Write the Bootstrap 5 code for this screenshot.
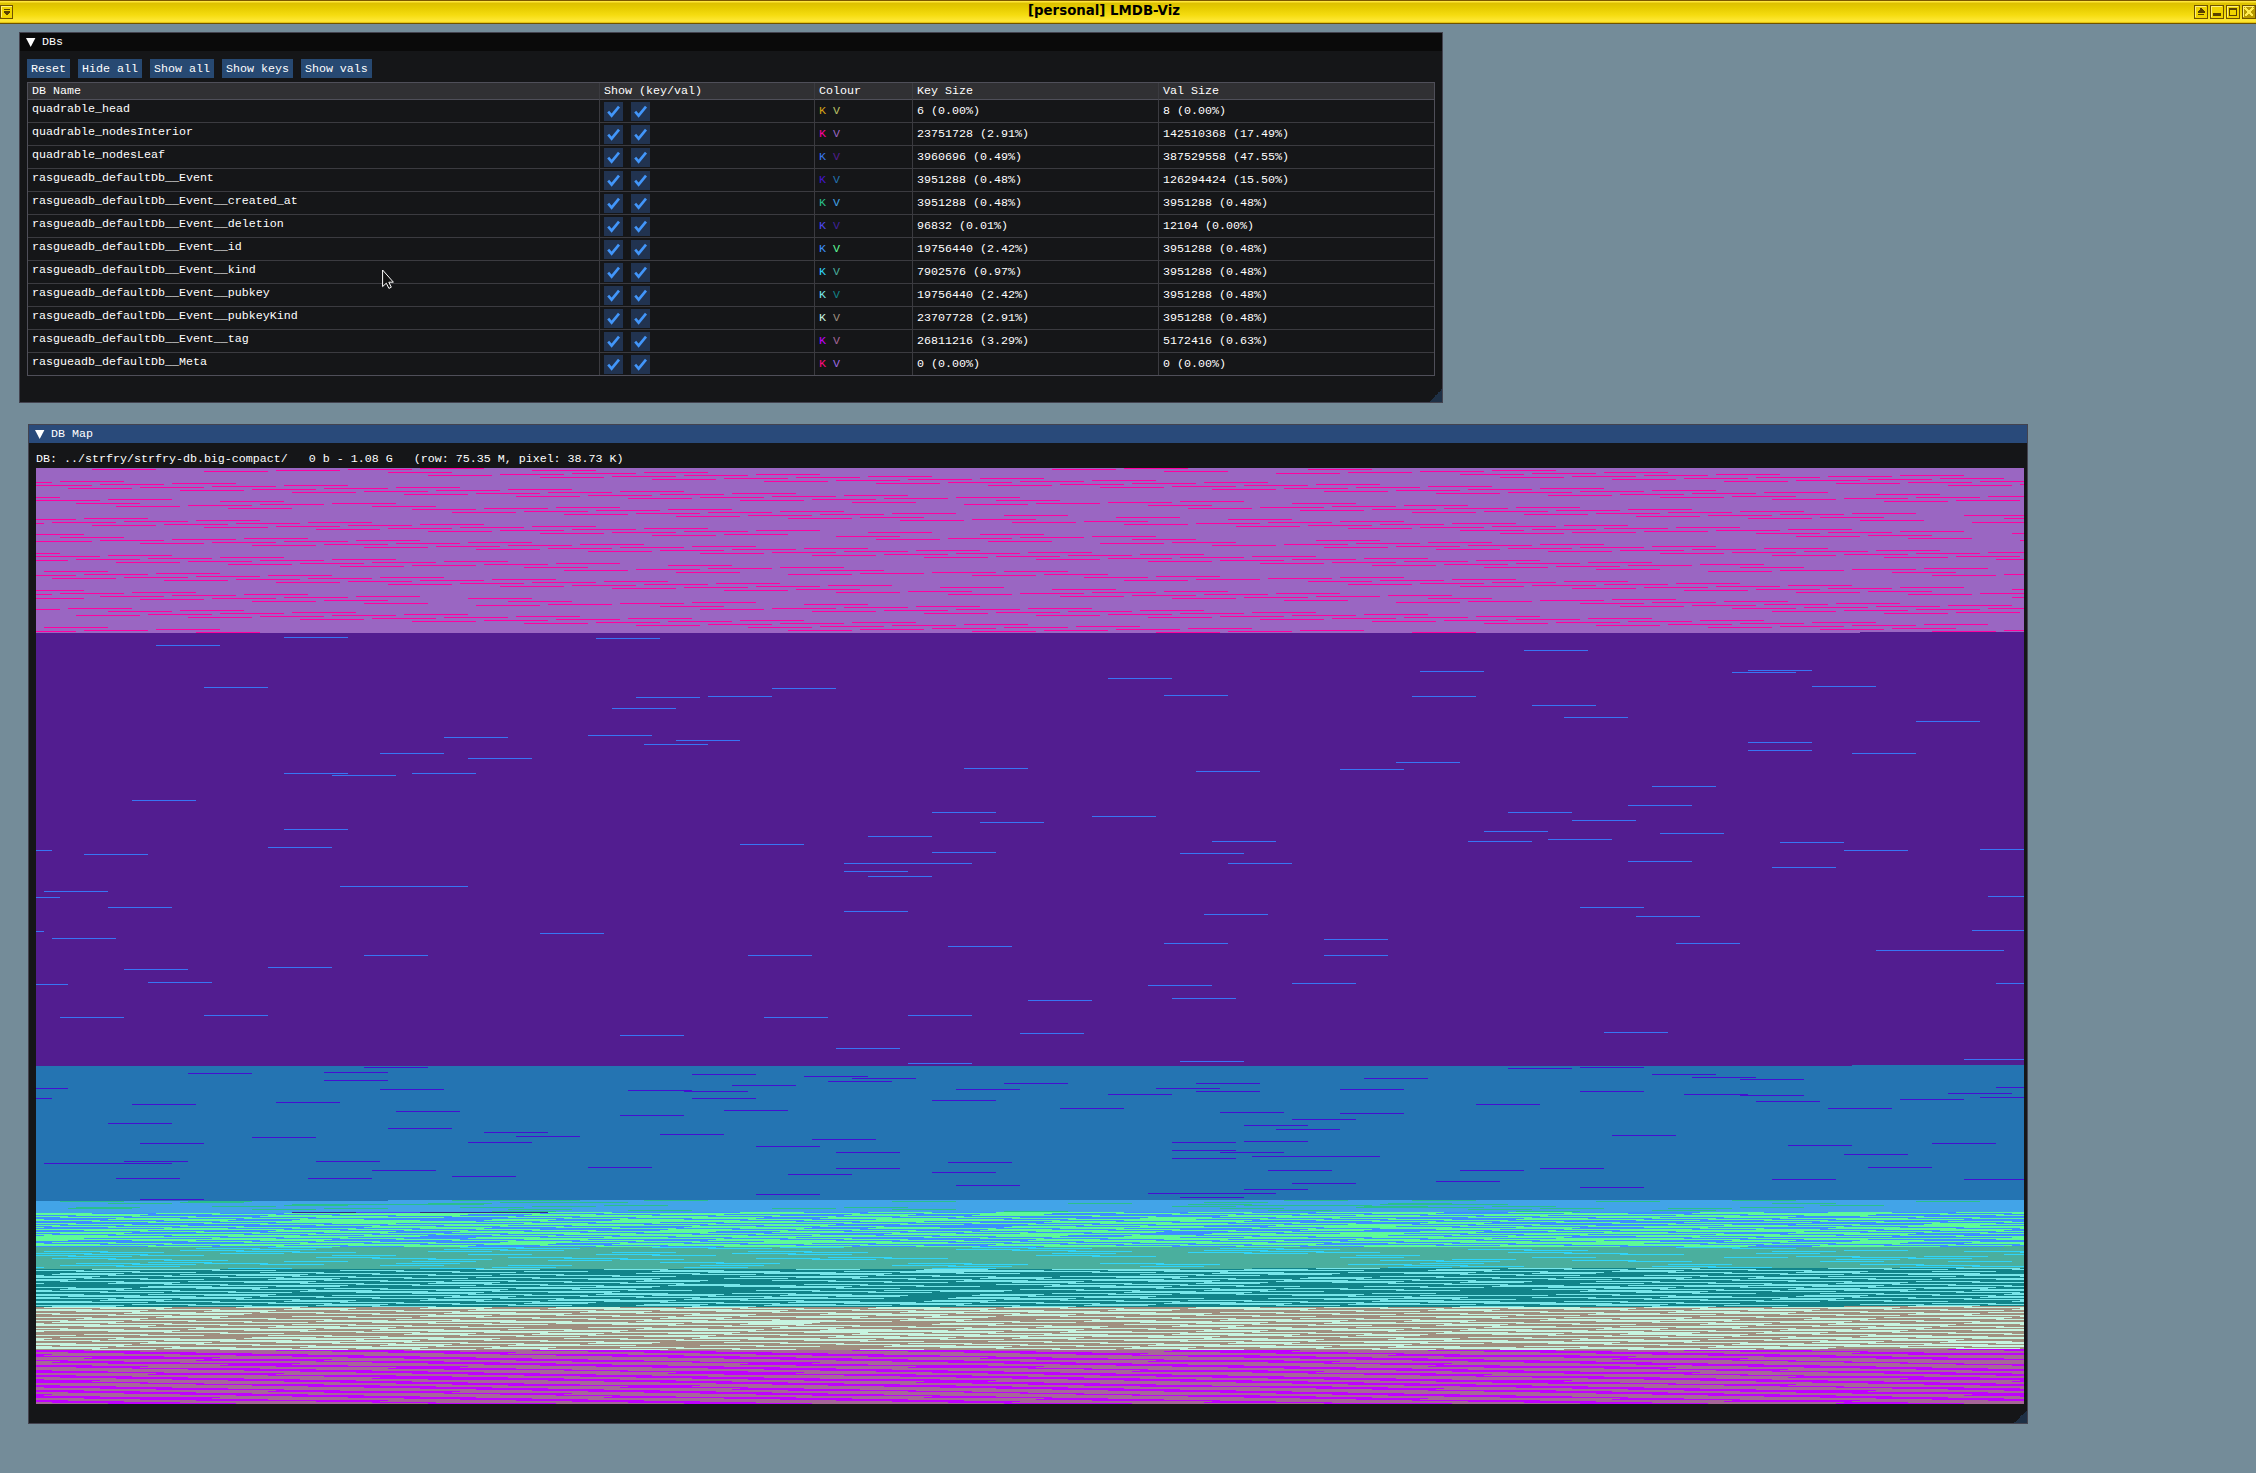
<!DOCTYPE html>
<html lang="en">
<head>
<meta charset="utf-8">
<title>[personal] LMDB-Viz</title>
<meta name="viewport" content="width=device-width, initial-scale=1">
<link href="https://cdn.jsdelivr.net/npm/bootstrap@5.3.0/dist/css/bootstrap.min.css" rel="stylesheet">
<style>
body{background:#748c99;font-family:"Liberation Mono",monospace;font-size:11.665px;line-height:13px;color:#fff;height:1473px}
.wm-bar{height:24px;border-top:1px solid #7a5800;border-bottom:1px solid #6e5200;background:linear-gradient(#ffe63a 0,#ffe63a 1px,#dcc000 2px,#e6cc00 7px,#f5dc10 14px,#ffe836 20px,#ffe020 21px,#c8a800 22px);color:#000;font:bold 13.33px/15px "DejaVu Sans",sans-serif}
.wm-btns{gap:2px}
.wm-bar svg{display:block}
.wm-menu{width:14px}
.wm-name{padding-top:2px}
.wm-fill{width:62px}
.desk{height:1449px}
.win{background:#151618;border:1px solid #43434f}
.win-dbs{left:19px;top:8px;width:1424px;height:371px}
.win-map{left:28px;top:400px;width:2000px;height:1000px}
.win-title{height:18px;background:#0a0a0a;padding:1px 0 0 6px;gap:6px}
.win-map .win-title{background:#294a7a}
.win-body{padding:8px 7px 0}
.win-map .win-body{padding:9px 7px 0}
.tool{height:19px;padding:1px 4px 0;border:0;border-radius:0;background:#274972;color:#fff;font:inherit;line-height:18px}
.tool:hover{background:#4296fa;color:#fff}
.tools{gap:8px}
.dbt{width:1408px;height:293px;margin-top:4px;table-layout:fixed;border-collapse:separate;border-spacing:0;border:1px solid #4f4f59;--bs-table-bg:transparent;--bs-table-color:#fff;color:#fff}
.dbt>:not(caption)>*>*{padding:0 0 0 4px;height:23px;border:0;border-bottom:1px solid #3b3b40;border-right:1px solid #3b3b40;font-weight:400;vertical-align:middle;box-shadow:none;color:inherit;background:none}
.dbt>thead>tr>th{height:17px;padding-top:1px;background:#303033;border-bottom-color:#4f4f59}
.dbt>tbody>tr:last-child>td{border-bottom:0;height:22px}
.dbt>*>tr>:last-child{border-right:0}
.dbt>tbody>tr>td.nm{vertical-align:top;padding-top:3px}
.dbt>tbody>tr>td.tx{padding-top:1px}
.boxes{gap:8px}
.tick{width:19px;height:19px;background:#213350;display:block}
.map-cap{height:16px;padding-top:1px;white-space:pre}
.map{display:block;width:1988px;height:936px}
.grip{right:0;bottom:0;width:13px;height:13px;background:linear-gradient(135deg,transparent 50%,#1e3045 50%)}
.ptr{left:382px;top:245px}
</style>
<script src="https://cdn.jsdelivr.net/npm/bootstrap@5.3.0/dist/js/bootstrap.bundle.min.js"></script>
</head>
<body class="m-0 overflow-hidden">
<header class="wm-bar d-flex justify-content-between">
  <div class="wm-menu pt-1">
    <svg width="14" height="14" viewBox="0 0 14 14" shape-rendering="crispEdges"><path d="M.5 .5h12v13h-12z" fill="#f0d400" stroke="#6e5200"/><path d="M1.5 12V1.5H12" fill="none" stroke="#fff07a"/><path d="M4 4h6v1H4zM4 6h6v2H9v1H8v1H6V9H5V8H4z" fill="#5a4200"/></svg>
  </div>
  <div class="wm-name text-nowrap">[personal] LMDB-Viz</div>
  <div class="wm-btns wm-fill d-flex pt-1">
    <svg width="14" height="14" shape-rendering="crispEdges"><path d="M.5 .5h13v13h-13z" fill="#f0d400" stroke="#6e5200"/><path d="M1.5 12V1.5H12" fill="none" stroke="#fff07a"/><path d="M6 3h2v1h1v1h1v1h1v2H4V6h1V5h1zM4 9h6v1H4z" fill="#5a4200"/></svg>
    <svg width="14" height="14" shape-rendering="crispEdges"><path d="M.5 .5h13v13h-13z" fill="#f0d400" stroke="#6e5200"/><path d="M1.5 12V1.5H12" fill="none" stroke="#fff07a"/><path d="M3 8h8v3H3z" fill="#5a4200"/></svg>
    <svg width="14" height="14" shape-rendering="crispEdges"><path d="M.5 .5h13v13h-13z" fill="#f0d400" stroke="#6e5200"/><path d="M1.5 12V1.5H12" fill="none" stroke="#fff07a"/><path d="M3 3h8v8H3zM4 5v5h6V5z" fill="#5a4200" fill-rule="evenodd"/></svg>
    <svg width="14" height="14" shape-rendering="crispEdges"><path d="M.5 .5h13v13h-13z" fill="#b89a00" stroke="#6e5200"/><path d="M1.5 12V1.5H12" fill="none" stroke="#fff07a"/><path d="M3 3l8 8M11 3l-8 8" stroke="#ffec50" stroke-width="2.4"/></svg>
  </div>
</header>

<main class="desk position-relative">
  <section class="win win-dbs position-absolute">
    <div class="win-title d-flex align-items-center">
      <svg width="10" height="10"><path d="M0 0h9.4L4.7 9z" fill="#fff"/></svg><span>DBs</span>
    </div>
    <div class="win-body">
      <div class="tools d-flex">
        <button class="btn tool" type="button">Reset</button>
        <button class="btn tool" type="button">Hide all</button>
        <button class="btn tool" type="button">Show all</button>
        <button class="btn tool" type="button">Show keys</button>
        <button class="btn tool" type="button">Show vals</button>
      </div>
      <table class="table dbt mb-0">
        <colgroup><col style="width:572px"><col style="width:215px"><col style="width:98px"><col style="width:246px"><col></colgroup>
        <thead><tr><th>DB Name</th><th>Show (key/val)</th><th>Colour</th><th>Key Size</th><th>Val Size</th></tr></thead>
        <tbody id="rows"></tbody>
      </table>
    </div>
    <div class="grip position-absolute"></div>
  </section>

  <section class="win win-map position-absolute">
    <div class="win-title d-flex align-items-center">
      <svg width="10" height="10"><path d="M0 0h9.4L4.7 9z" fill="#fff"/></svg><span>DB Map</span>
    </div>
    <div class="win-body">
      <div class="map-cap">DB: ../strfry/strfry-db.big-compact/   0 b - 1.08 G   (row: 75.35 M, pixel: 38.73 K)</div>
      <canvas class="map" id="map" width="1988" height="936"></canvas>
    </div>
    <div class="grip position-absolute"></div>
  </section>

  <svg class="ptr position-absolute" width="12" height="20"><path d="M.6 1v16.6l3.7-3.4 2.6 5.2 2.4-1.2-2.5-5h4.6z" fill="#111" stroke="#fff"/></svg>
</main>

<script>
const dbs = [
  ['quadrable_head','#d6a316','#bcc468','6 (0.00%)','8 (0.00%)'],
  ['quadrable_nodesInterior','#ff00a0','#9a66c2','23751728 (2.91%)','142510368 (17.49%)'],
  ['quadrable_nodesLeaf','#3876f0','#521d90','3960696 (0.49%)','387529558 (47.55%)'],
  ['rasgueadb_defaultDb__Event','#4415d0','#2474b2','3951288 (0.48%)','126294424 (15.50%)'],
  ['rasgueadb_defaultDb__Event__created_at','#29c08c','#42a4e8','3951288 (0.48%)','3951288 (0.48%)'],
  ['rasgueadb_defaultDb__Event__deletion','#4f48f5','#40249c','96832 (0.01%)','12104 (0.00%)'],
  ['rasgueadb_defaultDb__Event__id','#3c90ff','#5efa98','19756440 (2.42%)','3951288 (0.48%)'],
  ['rasgueadb_defaultDb__Event__kind','#30d4fa','#4aaf9e','7902576 (0.97%)','3951288 (0.48%)'],
  ['rasgueadb_defaultDb__Event__pubkey','#78e6ea','#12848a','19756440 (2.42%)','3951288 (0.48%)'],
  ['rasgueadb_defaultDb__Event__pubkeyKind','#c6f4e0','#a09080','23707728 (2.91%)','3951288 (0.48%)'],
  ['rasgueadb_defaultDb__Event__tag','#c000ff','#a66698','26811216 (3.29%)','5172416 (0.63%)'],
  ['rasgueadb_defaultDb__Meta','#ff0a80','#9c6ae0','0 (0.00%)','0 (0.00%)']
];
const tick = '<svg class="tick" viewBox="0 0 19 19"><path d="M4.2 9.6l3.4 4 7.4-9" fill="none" stroke="#4296fa" stroke-width="2.6"/></svg>';
document.getElementById('rows').innerHTML = dbs.map(d =>
  `<tr><td class="nm">${d[0]}</td><td><div class="boxes d-flex">${tick}${tick}</div></td><td class="tx"><span style="color:${d[1]}">K</span> <span style="color:${d[2]}">V</span></td><td class="tx">${d[3]}</td><td class="tx">${d[4]}</td></tr>`).join('');

// The file is one stream of 64px blocks that wraps every 1992px; the view clips at 1988px.
const ctx = document.getElementById('map').getContext('2d');
const STEP = 64, WRAP = 1992, U = 1988 / 1568;
const idx = (r, x) => Math.round((r * WRAP + x * U) / STEP);
function block(n, colour) {
  ctx.fillStyle = colour;
  let p = n * STEP, r = Math.floor(p / WRAP), x = p - r * WRAP;
  ctx.fillRect(x, r, STEP, 1);
  if (x + STEP > WRAP) ctx.fillRect(0, r + 1, x + STEP - WRAP, 1);
}
// [first row, first x, value colour, key colour, phase step, share of keys, scatter]
const bands = [
  [0,0,'#9a66c2'],
  [164,1439,'#521d90'],
  [597,1432,'#2474b2'],
  [732,278,'#42a4e8'],
  [744,404,'#5efa98','#3c90ff',.4071,.46,.3],
  [779,0,'#4aaf9e','#30d4fa',.3722,.20,.3],
  [800,960,'#12848a','#78e6ea',.4085,.42,.35],
  [838,1426,'#a09080','#c6f4e0',.4092,.46,.3],
  [881,1407,'#a66698','#c000ff',.2185,.42,.15]
];
const rnd = n => { let h = Math.imul(n ^ 0x9e37, 0x85ebca6b); h ^= h >>> 13; h = Math.imul(h, 0xc2b2ae35); h ^= h >>> 16; return (h >>> 0) / 4294967296; };
bands.forEach((b, i) => {
  const from = idx(b[0], b[1]), to = bands[i + 1] ? idx(bands[i + 1][0], bands[i + 1][1]) : Math.ceil(936 * WRAP / STEP);
  for (let n = from; n < to; n++) {
    const key = b[3] && (n * b[4] + b[6] * rnd(n)) % 1 < b[5];
    block(n, key ? b[3] : b[2]);
  }
});

const interior = `303,858/44,246,801,1003/189,391,1148/133,890,1092/278,480,1035,1237/423,978,1180/366,568,1123,1325/309,511,1268,1469/454,656,1211,1413/398,599,1155,1356/543,745,1300,1502/486,688,1243,1445/631,833,1388/19,574,776,1331,1533/719,921,1476/107,663,864,1420/50,808,1010,1565/196,751,953,1508/139,896,1098/82,284,839,1041/25,227,984,1186/170,372,928,1129/114,315,1073,1274/259,461,1016,1218/202,404,1161,1363/347,549,1104,1306/290,492,1249,1451/435,637,1193/379,581,1338,1539/524,726,1281,1483/467,669,1426/57,612,1369/0,555,757,1515/145,902,1458/644,846/32,233,789,991/177,732/120,877,1079/63,265,1022/410,965,1167/151,353,908,1110/297,498,1054,1256/442,997,1199/385,587,1142,1344/328,530,1085,1287/473,675,1230,1432/416,618,1174,1375/562,763,1319,1521/505,1262/650,852,1407/38,593,1350,1552/738,940/126,681,1439/69,827,1029/13,215,770,972,1527/158,915,1117/101,303,858,1060/44,246,1003,1205/189,391,946,1148/133,334,1092,1294/278,480,1035,1237/221,423,1180,1382/366,568,1123,1325/309,511,1268,1470/454,656,1211,1413/398,1155,1356,1558/543,745/486,1445/631,833,1388/19,776/164,719,1476/107,663,864/50,252,1010,1565/196,751/139,341,896,1098/82,284,839,1041/227,429,984,1186/170,372,928,1129/315,517,1073,1274/259,461,1016,1218/404,606,1161,1363/347,549,1104,1306/492,694,1249,1451/435,637,1193,1395/581,782,1338,1539/524,726,1281,1483/669,871,1426/57,612,814,1369/0,757,959,1515/145,700,902,1458/88,846,1047/32,233,789,991,1546/177,934,1136/120,322,877,1079/63,265,1022,1224/208,410,965,1167/151,353,1110,1312/297,498,1054,1256/240,1199/385,587,1142,1344/530,1489/473,1230,1432/416,618,1375/6,763,1319/505,707,1464/95,650/38,593,820,1552/183,738,1495/126,883/69,271,827,1029/13,215,972/158,360,915,1117/101,303,858,1060/246,448,1003,1205/189,391,1148/334,536,1092,1294/278,480,1035,1237/423,625,1180,1382/366,568,1123,1325/511,713,1268,1470/454,1211,1413/599,801,1356,1558/543,1300/688,890,1445/76,631,833,1388/19,776,978,1533/164,719,921,1476/107,864,1066/50,252,808,1010/196,953,1565/139,341,896,1098/82,1243/227,984,1186/170,372,1129,1331/517,1073,1274/259,461,1218,1420/404,606,1363/347,1306,1508/492,694,1249,1451/637,1395/25,581,782,1338,1539/524,726,1483/114,669,871,1426/57,612,814,1369/202,757,959,1515/145,700,902,1458/88,290,846,1047/32,233,789,991/177,379,934,1136/120,322,877,1079/265,467,1022,1224/208,410,965,1167/353,555,1110,1312/297,498,1054,1256/442,644,1199,1401/385,587,1142,1344/530,732,1287,1489/473,675,1230,1432/618,820,1375/6,562,763,1319/707,909,1464/95,650,852,1407/38,593,795,997,1552/738,940,1495/126,883,1085`;
interior.split('/').forEach((s, r) => s.split(',').forEach(x => block(idx(r, +x), '#ff00a0')));

function marks(list, colour) {
  list.split(' ').forEach(s => { const [r, xs] = s.split(':'); xs.split(',').forEach(x => block(idx(+r, +x), colour)); });
}
marks('169:196 170:442 177:95 182:1174 202:1350 203:1092 204:1338 210:846 218:1401 219:133 220:581 227:890 228:530,1085 229:473 237:1180 240:454 249:1205 253:1483 267:435 269:322 272:505 274:1350 276:480 282:1350 285:271,1432 290:341 294:1073 300:732 301:1029 303:915 305:196,297 307:233 318:1275 332:76 337:1256 344:707,1161 348:833 352:1211 354:745 361:196 363:1142 365:1281 368:656 371:1193 373:928,1129 374:1376 376:555 379:183 381:1533 382:1426 384:707 385:902 386:38 393:1256 395:637,687,940 399:1369 403:637 408:656 418:240,290 423:6 428:1540 439:57,1218 443:637 446:921 448:1262 462:1527 465:398 470:13 471:1016 475:890,1294 478:719 482:1451,1501 487:259,562,1016 499:183 501:69 514:88 515:991,1546 517:877 530:896 532:782 547:133,688 549:19,574 564:1237 565:776 567:461 580:631 591:1521 593:902 595:688', '#3876f4');
marks('599:259,1218 600:1161 604:227 605:120 606:517,1275 608:606 609:1306 610:644,1047 611:1344 612:227 613:625 615:763,915 617:549 619:1546 620:883 621:271,726,1029 622:467 623:511,915,1218 625:1508 626:846,1300 627:1344 629:1533 630:517 631:1470 632:707 633:1357 634:189 636:76,1136 640:808,1413 642:543 643:284 644:934 645:1029 647:461 651:991 655:57 657:953 660:278 661:978 664:353 666:492 667:1243 668:379 669:170 671:612 673:953 674:341,896 675:82,1495 677:1382 678:568 682:896 684:631,934 686:1426 688:959,1010 690:896 693:69,221 694:719 695:6,57 699:435,1445 700:631,1186 702:265,972,1123 704:707 706:593 708:328 710:63,215 711:1369,1521 713:1104 715:991 717:726 719:1218 721:953 725:877,928 726:568 729:902 731:82', '#4410d0');
marks('732:328,378,480,983,1085,1337 733:19,119,675,1230,1483 734:113,366,416,921 735:57,309,814,1067,1369 736:208,258,309,910,1060,1110 737:196,448,953,1004,1408 738:145,397,902,1054,1155 739:38,340,643,1047,1097,1349 740:0,240,593,946,1198,1300 741:183,385,688,1142 742:480,985,1287 743:366,770,1170', '#29c08c');
// Deletion index: a handful of pages between created_at and id.
marks('744:202,303,353', '#38248c');
marks('744:252', '#4f48f5');
</script>
</body>
</html>
